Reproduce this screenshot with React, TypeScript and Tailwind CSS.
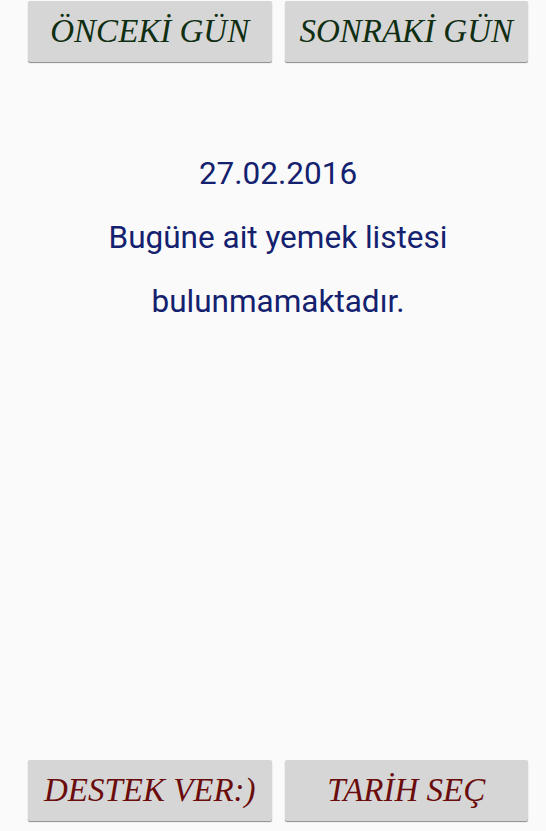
export default function App() {
  const btn =
    "flex-1 h-[61px] flex items-center justify-center bg-[#d6d6d6] rounded-[2px] shadow-[0_1px_1px_rgba(0,0,0,0.45)] italic text-[33px] leading-none";

  return (
    <div className="h-[831px] w-[546px] flex flex-col bg-[#fafafa] overflow-hidden">
      <div className="flex gap-[13px] pl-[28px] pr-[18px] pt-[1px] font-['Liberation_Serif',serif] text-[#0f2e12]">
        <button className={btn}>ÖNCEKİ GÜN</button>
        <button className={btn}>SONRAKİ GÜN</button>
      </div>

      <div className="flex-1 flex flex-col items-center pt-[80px] pl-[10px] font-['Roboto',sans-serif] text-[31.5px] leading-[64px] text-[#13216f]">
        <p>27.02.2016</p>
        <p>Bugüne ait yemek listesi</p>
        <p>bulunmamaktadır.</p>
      </div>

      <div className="flex gap-[13px] pl-[28px] pr-[18px] pb-[10px] font-['Liberation_Serif',serif] text-[#6b0c0c]">
        <button className={btn}>DESTEK VER:)</button>
        <button className={btn}>TARİH SEÇ</button>
      </div>
    </div>
  );
}
